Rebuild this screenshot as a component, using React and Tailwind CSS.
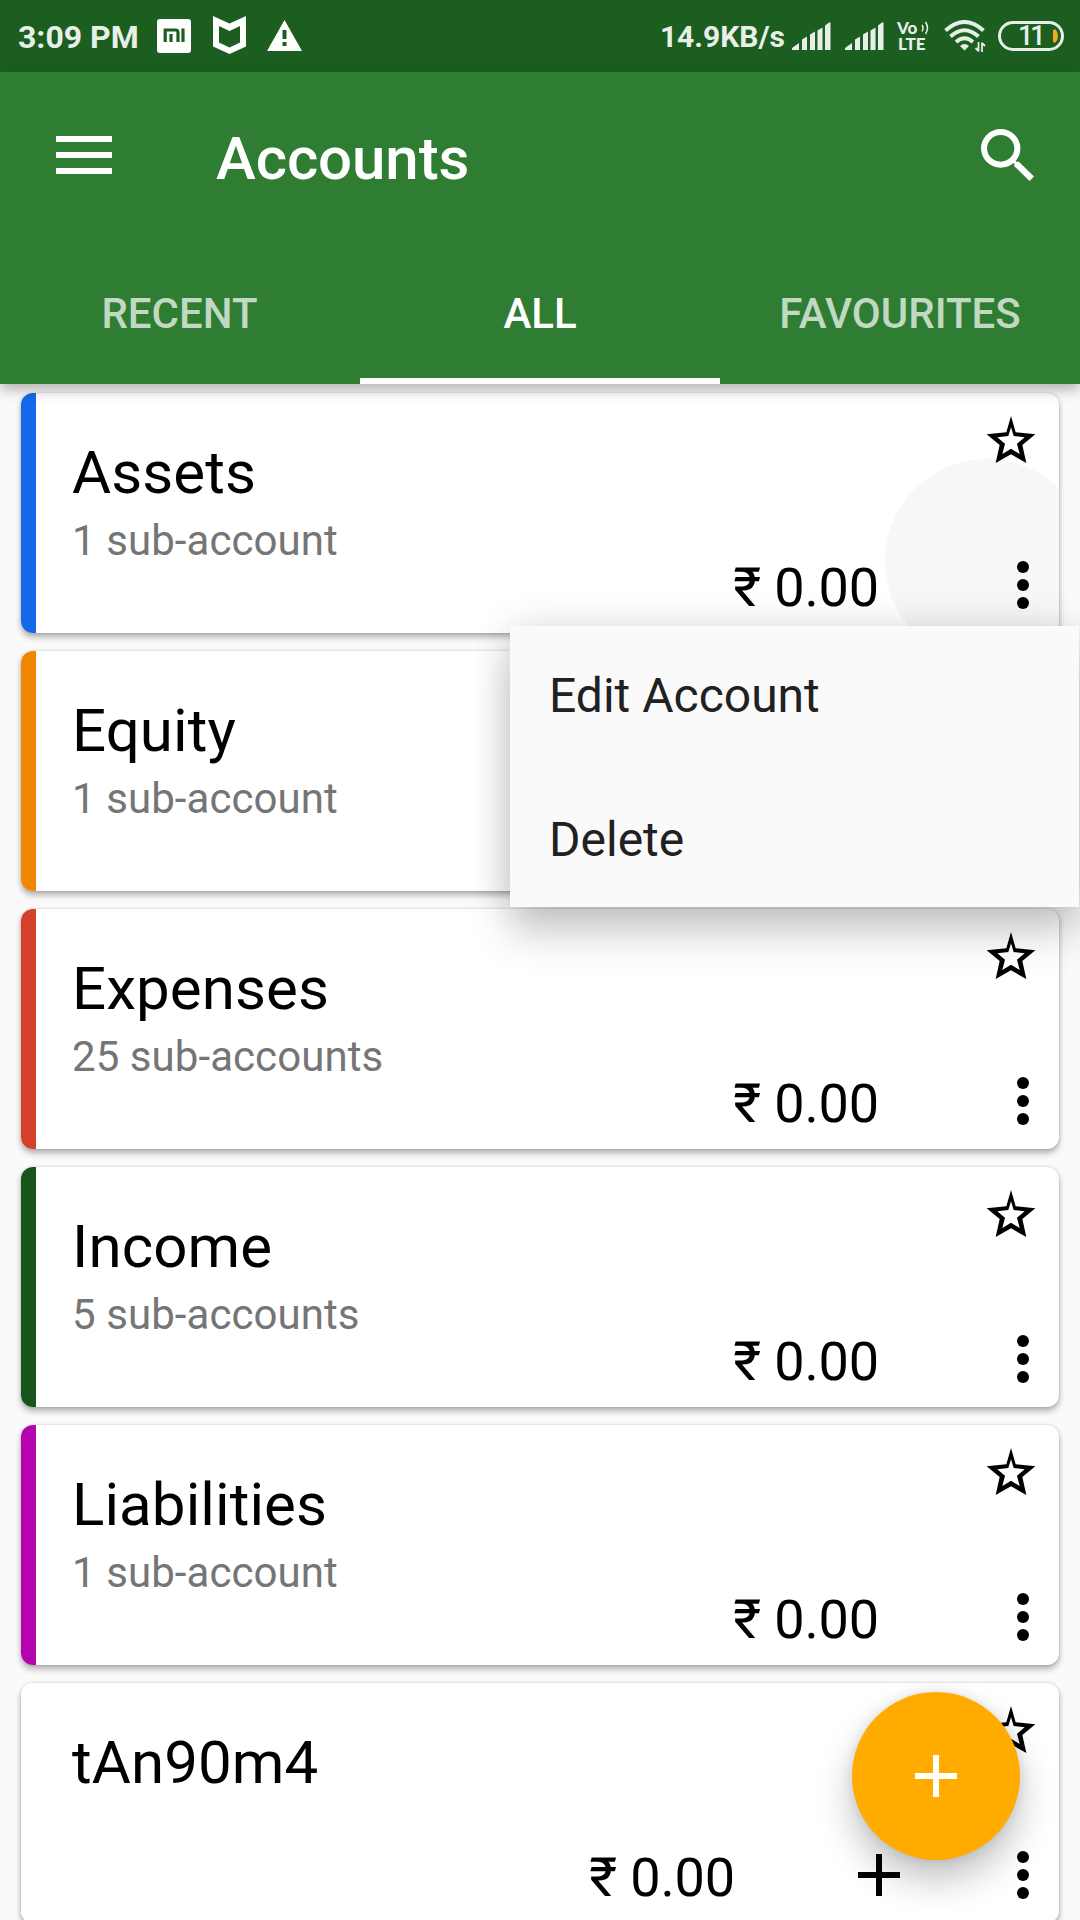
const ACCOUNTS = [
  { name: "Assets", sub: "1 sub-account", bar: "bg-[#1468ea]", pressed: true },
  { name: "Equity", sub: "1 sub-account", bar: "bg-[#ef8800]" },
  { name: "Expenses", sub: "25 sub-accounts", bar: "bg-[#d3402c]" },
  { name: "Income", sub: "5 sub-accounts", bar: "bg-[#19551a]" },
  { name: "Liabilities", sub: "1 sub-account", bar: "bg-[#b304ad]" },
  { name: "tAn90m4", sub: "", bar: "bg-white", addable: true },
];

function SignalBars() {
  return (
    <svg className="h-7 w-[39px] shrink-0" viewBox="0 0 39 28" fill="#e8efe8">
      <path d="M0 28v-2l7-5v7zM10 28V17.500l5-3V28zM18 28V12.500l5-3V28zM25.500 28V8.500l5-3V28zM33 28V3.500L37 .500H38.500V28z" />
    </svg>
  );
}

function StatusBar() {
  return (
    <div className="flex h-[72px] items-center justify-between bg-[#1b5e20] text-[#e8efe8]">
      <div className="flex items-center pl-[18px]">
        <span className="w-[139px] pt-0.5 text-[32px] leading-[70px] font-bold whitespace-nowrap">3:09 PM</span>
        <svg className="h-[34px] w-[34px]" viewBox="0 0 34 34">
          <rect width="34" height="34" rx="3" fill="#fff" />
          <path d="M8.200 23V11h10.300q2.500 0 2.500 2.500V23M14 15v8M26 9.500V23" fill="none" stroke="#1b5e20" strokeWidth="3.200" />
        </svg>
        <svg className="-mt-0.5 ml-[22px] h-[38px] w-[33px]" viewBox="0 0 33 38">
          <path d="M0 0L16.500 7.500 33 0V30.500L16.500 38 0 30.500zM6 10V26.500L16.500 31.500 27 26.500V10L16.500 15z" fill="#fff" fillRule="evenodd" />
        </svg>
        <svg className="-mt-0.5 ml-[21px] h-[31px] w-[35px]" viewBox="0 0 35 31">
          <path d="M17.500 0L35 31H0zM15.500 10v9h4v-9zM15.500 22v4h4v-4z" fill="#fff" fillRule="evenodd" />
        </svg>
      </div>
      <div className="flex items-center pr-4">
        <span className="mr-[7px] pt-0.5 text-[30px] leading-[70px] font-bold whitespace-nowrap">14.9KB/s</span>
        <SignalBars />
        <span className="w-3.5" />
        <SignalBars />
        <div className="ml-[13px] flex h-8 w-[33px] flex-col font-['Lato',sans-serif] font-black">
          <div className="flex h-4 items-center">
            <span className="w-[24px] text-[17px] leading-4">Vo</span>
            <svg className="h-4 w-[9px]" viewBox="0 0 9 16">
              <path d="M1 5q2 3 0 6.500M4.500 2q4 6 0 12" fill="none" stroke="#e8efe8" strokeWidth="1.500" />
            </svg>
          </div>
          <span className="pl-px text-[17px] leading-4">LTE</span>
        </div>
        <svg className="ml-[14px] h-8 w-[42px]" viewBox="0 0 42 32">
          <g fill="none" stroke="#e8efe8" strokeWidth="3.900">
            <path d="M1.500 10.500Q20.500 -6.500 39.500 10.500" />
            <path d="M6.500 16.500Q20.500 4 34.500 16.500" />
            <path d="M12 22Q20.500 14.500 29 22" />
          </g>
          <path d="M16 26q4.500-4 9 0l-4.500 4.500z" fill="#e8efe8" />
          <path d="M34.500 22v9.500M31.500 28l3 3M38 32v-9.500M41 26l-3-3" fill="none" stroke="#e8efe8" strokeWidth="1.800" />
        </svg>
        <div className="ml-3 flex h-[30px] w-[66px] items-center rounded-full border-[3px] border-[#e8efe8]">
          <span className="ml-[17px] w-[35px] text-[27px] leading-6 font-medium tracking-[-3px]">11</span>
          <svg className="h-[14px] w-[5px]" viewBox="0 0 5 14">
            <path d="M1 .500H2.500Q5 3 5 7T2.500 13.500H1Q0 13.500 0 12V2Q0 .500 1 .500z" fill="#f9a825" />
          </svg>
        </div>
      </div>
    </div>
  );
}

function AppBar() {
  return (
    <header className="relative z-10 flex h-[312px] flex-col bg-[#2f7d32] text-white shadow-[0_6px_12px_rgba(0,0,0,0.28)]">
      <div className="flex h-[168px] items-center pr-[46px] pl-[56px]">
        <svg className="-mt-0.5 h-[38px] w-[56px]" viewBox="0 0 56 38" fill="#fff">
          <path d="M0 0h56v6H0zM0 16h56v6H0zM0 32h56v6H0z" />
        </svg>
        <h1 className="ml-[104px] flex-1 pt-1.5 text-[60px] leading-[72px] font-medium tracking-[-0.1px]">Accounts</h1>
        <svg className="-mt-0.5 h-[52px] w-[53px]" viewBox="3 3 17.490 17.490" preserveAspectRatio="none" fill="#fff">
          <path d="M15.500 14h-.790l-.280-.270A6.471 6.471 0 0 0 16 9.500 6.500 6.500 0 1 0 9.500 16c1.610 0 3.090-.590 4.230-1.570l.270.280v.790l5 4.990L20.490 19l-4.990-5zm-6 0C7.010 14 5 11.990 5 9.500S7.010 5 9.500 5 14 7.010 14 9.500 11.990 14 9.500 14z" />
        </svg>
      </div>
      <nav className="grid h-36 grid-cols-3 text-center text-[42px] leading-[148px] font-medium">
        <span className="-ml-px text-[#c1d8c2]">RECENT</span>
        <span className="h-36 border-b-[6px] border-white">ALL</span>
        <span className="text-[#c1d8c2]">FAVOURITES</span>
      </nav>
    </header>
  );
}

function AccountCard({ name, sub, bar, pressed, addable }) {
  return (
    <article className="relative flex h-60 shrink-0 rounded-[12px] bg-white shadow-[0_4px_6px_rgba(0,0,0,0.3),0_0_3px_rgba(0,0,0,0.15)]">
      {pressed && (
        <div className="absolute inset-0 overflow-hidden rounded-[12px]">
          <div className="absolute top-[66px] left-[864px] h-[204px] w-[204px] rounded-full bg-[#f7f7f7]" />
        </div>
      )}
      <div className={"w-[15px] shrink-0 rounded-l-[12px] " + bar} />
      <div className="relative flex flex-1 flex-col">
        <div className="flex h-[168px] justify-between pr-[23px] pl-[36px]">
          <div className="pt-[44px]">
            <h2 className="text-[60px] leading-[72px] tracking-[0.1px] text-black">{name}</h2>
            <p className="mt-3 text-[42px] leading-10 tracking-[0.07px] text-[#757575]">{sub}</p>
          </div>
          <svg className="mt-[23px] h-[47px] w-[50px]" viewBox="30 30 150 141">
            <path fillRule="evenodd" d="M105 30L119 79 178 85 139 117 151 171 105 145 59 171 71 117 32 85 91 79ZM105 64L97 90 64 94 87 113 79 144 105 128 131 144 123 113 146 94 113 90Z" />
          </svg>
        </div>
        <div className="flex items-start justify-end pr-[30px]">
          <span className="text-[54px] leading-[54px] tracking-[-0.15px] text-black">₹ 0.00</span>
          {addable && (
            <svg className="ml-[123px] h-12 w-[42px]" viewBox="0 0 42 48">
              <path d="M18 3h6v18h18v6H24v18h-6V27H0v-6h18z" />
            </svg>
          )}
          <svg className={addable ? "ml-[117px] h-12 w-3" : "ml-[138px] h-12 w-3"} viewBox="0 0 12 48">
            <circle cx="6" cy="6" r="6" />
            <circle cx="6" cy="24" r="6" />
            <circle cx="6" cy="42" r="6" />
          </svg>
        </div>
      </div>
    </article>
  );
}

export default function App() {
  return (
    <div className="relative h-[1920px] w-[1080px] overflow-hidden bg-[#fafafa] font-['Roboto',sans-serif]">
      <StatusBar />
      <AppBar />
      <main className="flex flex-col gap-[18px] px-[21px] pt-[9px]">
        {ACCOUNTS.map((account) => (
          <AccountCard key={account.name} {...account} />
        ))}
      </main>
      <div className="absolute top-[626px] left-[510px] z-20 h-[281px] w-[569px] bg-[#fafafa] pl-[39px] text-[48px] text-[#212121] shadow-[0_26px_40px_rgba(0,0,0,0.2),0_0_36px_rgba(0,0,0,0.12)]">
        <div className="leading-[139px]">Edit Account</div>
        <div className="leading-[149px]">Delete</div>
      </div>
      <button className="absolute top-[1692px] left-[852px] z-20 flex h-[168px] w-[168px] items-center justify-center rounded-full bg-[#ffab00] shadow-[0_20px_36px_rgba(0,0,0,0.24),0_0_12px_rgba(0,0,0,0.1)]">
        <svg className="h-[42px] w-[42px]" viewBox="0 0 42 42" fill="#fff">
          <path d="M18 0h6v18h18v6H24v18h-6V24H0v-6h18z" />
        </svg>
      </button>
    </div>
  );
}
